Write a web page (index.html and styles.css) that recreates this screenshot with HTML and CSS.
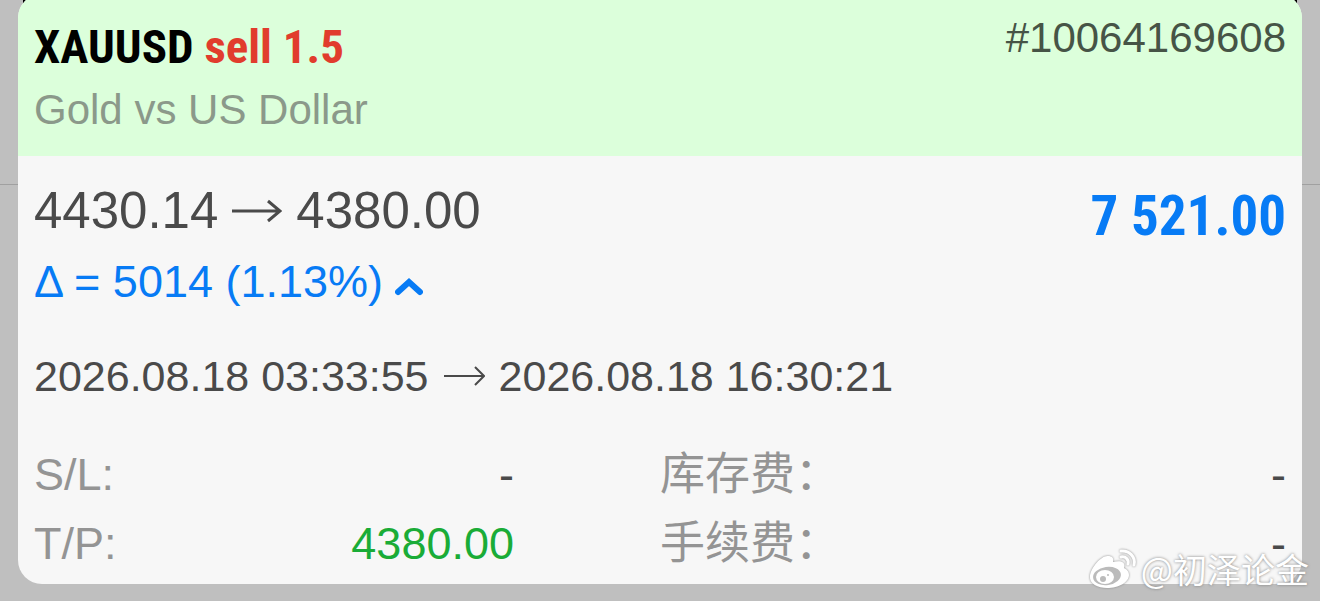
FILE: index.html
```html
<!DOCTYPE html>
<html lang="zh-CN">
<head>
    <meta charset="UTF-8">
    <meta name="viewport" content="width=device-width, initial-scale=1.0">
    <title>XAUUSD</title>
    <link rel="stylesheet" href="styles.css">
</head>
<body>
    <div class="top-edge"></div>
    <div class="list-line"></div>

    <main class="card">
        <header class="card-header">
            <div>
                <h1 class="symbol">XAUUSD <span class="sell">sell 1.5</span></h1>
                <p class="description">Gold vs US Dollar</p>
            </div>
            <span class="ticket">#10064169608</span>
        </header>

        <section class="card-body">
            <div class="summary">
                <div class="prices">
                    <span>4430.14</span>
                    <svg class="arrow" width="50" height="24" viewBox="0 0 50 24" aria-hidden="true">
                        <path d="M0 12H47M36 2L48 12L36 22"/>
                    </svg>
                    <span>4380.00</span>
                </div>
                <strong class="profit">7 521.00</strong>
            </div>

            <button class="delta" type="button" aria-expanded="true">
                <span>Δ = 5014 (1.13%)</span>
                <svg class="chevron" width="28" height="20" viewBox="0 0 28 20" aria-hidden="true">
                    <path d="M3 16L14 6L25 16"/>
                </svg>
            </button>

            <div class="times">
                <time datetime="2026-08-18T03:33:55">2026.08.18 03:33:55</time>
                <svg class="arrow arrow-thin" width="42" height="20" viewBox="0 0 42 20" aria-hidden="true">
                    <path d="M1 10H41M32 1L41 10L32 19"/>
                </svg>
                <time datetime="2026-08-18T16:30:21">2026.08.18 16:30:21</time>
            </div>

            <dl class="details">
                <div class="detail"><dt>S/L:</dt><dd>-</dd></div>
                <div class="detail"><dt>库存费：</dt><dd>-</dd></div>
                <div class="detail"><dt>T/P:</dt><dd class="green">4380.00</dd></div>
                <div class="detail"><dt>手续费：</dt><dd>-</dd></div>
            </dl>
        </section>
    </main>

    <div class="watermark">
        <svg class="weibo" width="50" height="42" viewBox="0 0 50 42" aria-hidden="true">
            <path class="fill" d="M20 8C14 7 3 19 2 28C1 36 10 40 19 40C31 40 41 34 41 27C41 23 38 21 36 20C38 14 33 12 25 14C26 10 24 8 20 8Z"/>
            <ellipse class="eye" cx="19" cy="28" rx="14" ry="9" transform="rotate(-8 19 28)"/>
            <ellipse class="fill" cx="17" cy="29" rx="9" ry="7"/>
            <circle class="pupil" cx="15" cy="31" r="3"/>
            <circle class="pupil" cx="20" cy="27" r="1"/>
            <path class="wave" d="M33 3C41 2 48 9 46 17M33 9C38 8 41 12 40 16"/>
        </svg>
        <span>@初泽论金</span>
    </div>
</body>
</html>
```

FILE: styles.css
```css
* {
    box-sizing: border-box;
}
body {
    margin: 0;
    min-height: 100vh;
    position: relative;
    overflow: hidden;
    background: #bfbfbf;
    color: #4a4a4a;
    font-family: "Liberation Sans", "Noto Sans CJK SC", sans-serif;
}
h1, p, dl, dd {
    margin: 0;
}
.top-edge {
    position: absolute;
    top: 0;
    left: 23px;
    right: 23px;
    height: 4px;
    background: black;
}
.list-line {
    position: absolute;
    top: 184px;
    left: 0;
    right: 0;
    height: 1px;
    background: #a0a0a0;
}
.card {
    position: relative;
    margin: -6px 18px 0;
    border-radius: 24px;
    overflow: hidden;
    background: #f7f7f7;
}
.card-header {
    display: flex;
    justify-content: space-between;
    padding: 20px 16px 16px;
    background: #dcffdb;
}
.symbol {
    font-family: "Roboto Condensed", "Liberation Sans", sans-serif;
    font-size: 47px;
    line-height: 66px;
    color: black;
}
.sell {
    color: #e13c2d;
}
.description {
    font-size: 42px;
    line-height: 60px;
    color: #8b998a;
}
.ticket {
    font-size: 42px;
    line-height: 48px;
    color: #465446;
}
.card-body {
    padding: 24px 16px 6px;
}
.summary {
    display: flex;
    justify-content: space-between;
    align-items: flex-start;
}
.prices {
    display: flex;
    align-items: center;
    gap: 14px;
    font-size: 51px;
    line-height: 62px;
}
.arrow {
    fill: none;
    stroke: #4a4a4a;
    stroke-width: 3;
}
.arrow-thin {
    stroke-width: 2;
}
.profit {
    font-family: "Roboto Condensed", "Liberation Sans", sans-serif;
    font-size: 55px;
    line-height: 72px;
    color: #077bf5;
}
.delta {
    display: flex;
    align-items: center;
    gap: 12px;
    padding: 0;
    border: none;
    background: none;
    color: #077bf5;
    font-family: inherit;
    font-size: 45px;
    line-height: 60px;
    cursor: pointer;
}
.chevron {
    margin-top: 8px;
    fill: none;
    stroke: #077bf5;
    stroke-width: 6;
    stroke-linecap: round;
}
.times {
    display: flex;
    align-items: center;
    gap: 14px;
    margin: 34px 0;
    font-size: 43px;
    line-height: 60px;
}
.details {
    display: grid;
    grid-template-columns: 1fr 1fr;
}
.detail {
    display: flex;
    justify-content: space-between;
    font-size: 45px;
    line-height: 69px;
}
.detail:nth-child(odd) {
    padding-right: 146px;
}
dt {
    color: #949494;
}
.green {
    color: #1aac37;
}
.watermark {
    position: absolute;
    right: 11px;
    bottom: 10px;
    display: flex;
    align-items: center;
    gap: 3px;
    color: white;
    font-family: "Noto Sans CJK SC", sans-serif;
    font-size: 34px;
    line-height: 44px;
    text-shadow: 0 0 3px #777;
}
.weibo {
    filter: drop-shadow(0 0 1px #888);
}
.fill {
    fill: white;
}
.eye, .pupil {
    fill: #bbb;
}
.wave {
    fill: none;
    stroke: white;
    stroke-width: 3;
    stroke-linecap: round;
}
```
